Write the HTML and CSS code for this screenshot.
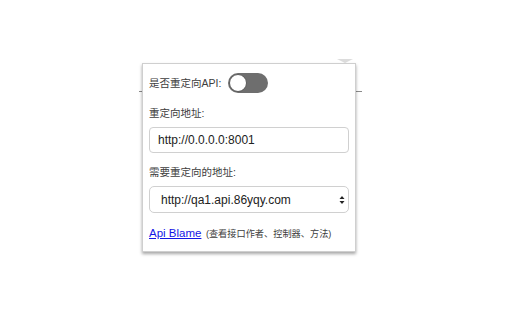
FILE: index.html
```html
<!DOCTYPE html>
<html lang="zh-CN">
<head>
<meta charset="utf-8">
<link rel="stylesheet" href="styles.css">
</head>
<body>
<div class="stage">
  <div class="rule"></div>
  <div class="notch"></div>
  <div class="popup">
    <div class="row">
      <span class="label">是否重定向API:</span>
      <span class="toggle"><span class="knob"></span></span>
    </div>
    <div class="label label-block">重定向地址:</div>
    <input class="field" type="text" value="http://0.0.0.0:8001">
    <div class="label label-block">需要重定向的地址:</div>
    <div class="select-wrap">
      <select class="field select">
        <option>http://qa1.api.86yqy.com</option>
      </select>
      <svg class="arrows" width="6" height="10" viewBox="0 0 6 10">
        <path d="M0.5 4 L3 1 L5.5 4 Z" fill="#222"/>
        <path d="M0.5 6 L3 9 L5.5 6 Z" fill="#222"/>
      </svg>
    </div>
    <div class="foot"><a class="link" href="#">Api Blame</a> <span class="note">(查看接口作者、控制器、方法)</span></div>
  </div>
</div>
</body>
</html>
```

FILE: styles.css
```css
html, body {
  margin: 0;
  padding: 0;
  background: #ffffff;
}
body {
  width: 512px;
  height: 320px;
  overflow: hidden;
  font-family: "Liberation Sans", "Noto Sans CJK SC", sans-serif;
}
.stage {
  position: relative;
  width: 512px;
  height: 320px;
  padding-top: 63px;
  box-sizing: border-box;
}
.rule {
  position: absolute;
  left: 139px;
  top: 91px;
  width: 223px;
  height: 1px;
  background: #8a8a8a;
}
.notch {
  position: absolute;
  left: 337px;
  top: 59px;
  width: 0;
  height: 0;
  border-left: 8px solid transparent;
  border-right: 8px solid transparent;
  border-top: 4px solid #dcdcdc;
}
.popup {
  position: relative;
  margin-left: 142px;
  width: 214px;
  box-sizing: border-box;
  background: #ffffff;
  border: 1px solid #cfcfcf;
  box-shadow: 0 2px 3px rgba(0, 0, 0, 0.35);
  padding: 9px 6px 12px 6px;
  display: flex;
  flex-direction: column;
}
.row {
  display: flex;
  align-items: center;
  height: 20px;
  gap: 7px;
}
.label {
  font-family: "Liberation Sans", "Noto Sans CJK SC", sans-serif;
  font-size: 10.5px;
  line-height: 14px;
  color: #3d3d3d;
}
.label-block {
  margin-top: 13px;
  height: 14px;
}
.label-block + .field,
.label-block + .select-wrap {
  margin-top: 7px;
}
.field + .label-block,
.select-wrap + .label-block {
  margin-top: 12px;
}
.toggle {
  position: relative;
  width: 40px;
  height: 20px;
  border-radius: 10px;
  background: #6e6e6e;
  display: inline-block;
}
.knob {
  position: absolute;
  left: 1px;
  top: 1px;
  width: 16px;
  height: 16px;
  border-radius: 50%;
  background: #ffffff;
  border: 1px solid #5a5a5a;
}
.field {
  display: block;
  width: 200px;
  height: 26px;
  box-sizing: border-box;
  margin: 0;
  border: 1px solid #d0d0d0;
  border-radius: 4px;
  background: #ffffff;
  font-family: "Liberation Sans", sans-serif;
  font-size: 12px;
  color: #222;
  padding: 0 0 0 8px;
  outline: none;
}
.select-wrap {
  position: relative;
  width: 200px;
  height: 27px;
}
.select {
  height: 27px;
  padding-left: 11px;
  border-radius: 5px;
  appearance: none;
  -webkit-appearance: none;
}
.arrows {
  position: absolute;
  right: 4px;
  top: 9px;
}
.foot {
  margin-top: 12px;
  height: 14px;
  line-height: 14px;
  white-space: nowrap;
}
.link {
  font-family: "Liberation Sans", sans-serif;
  font-size: 11.5px;
  color: #1515e6;
  text-decoration: underline;
}
.note {
  font-family: "Liberation Sans", "Noto Sans CJK SC", sans-serif;
  font-size: 9.2px;
  color: #3d3d3d;
}
```
